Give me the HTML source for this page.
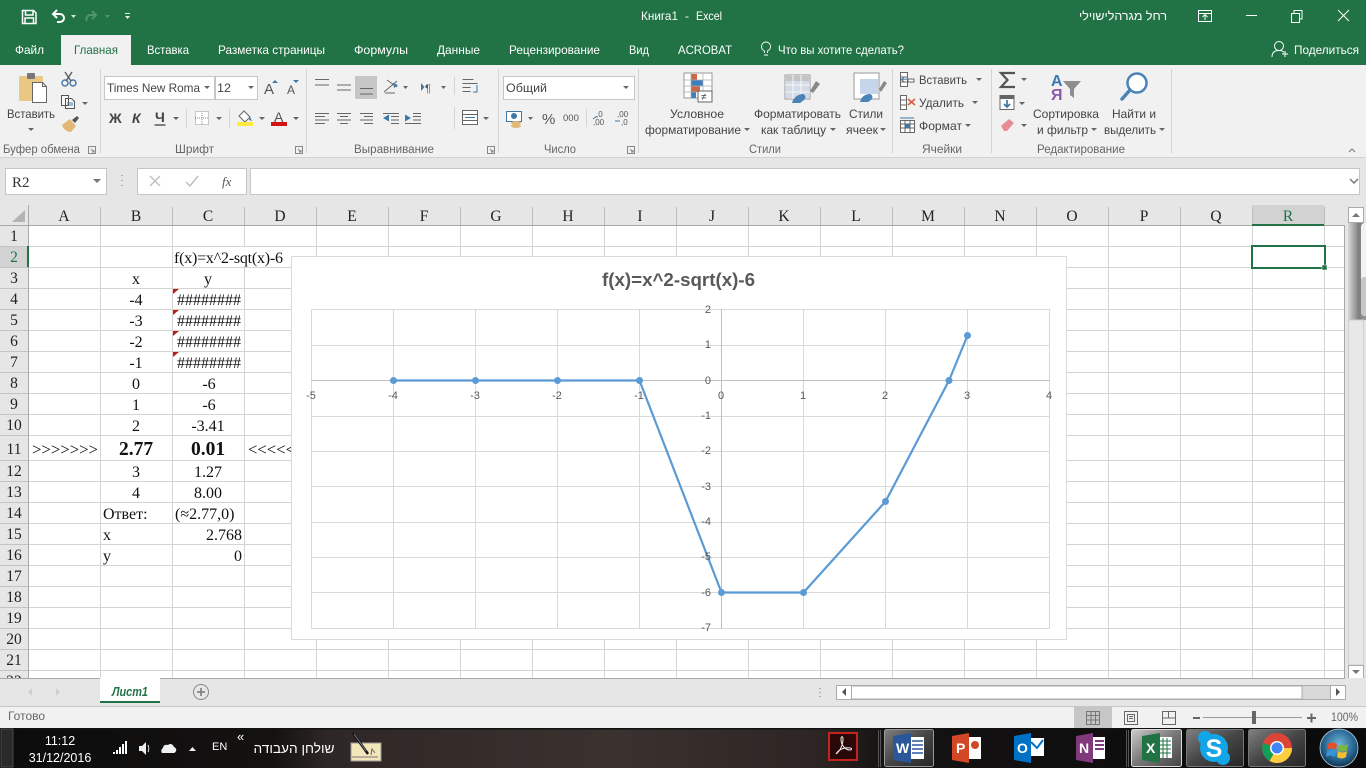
<!DOCTYPE html>
<html lang="ru"><head><meta charset="utf-8"><title>Книга1 - Excel</title>
<style>
html,body{margin:0;padding:0;background:#fff;width:1366px;height:768px;overflow:hidden}
svg{display:block;position:absolute;left:0;top:0}
text{font-family:"Liberation Sans","Noto Sans CJK SC",sans-serif;white-space:pre}
.w{fill:#fff;font-size:12px}
.r{fill:#444;font-size:12px}
.g{fill:#666;font-size:11.5px}
.s{font-family:"Liberation Serif",serif;font-size:16px;fill:#111}
.h{font-family:"Liberation Serif",serif;font-size:15.5px;fill:#222;text-anchor:middle}
.c{text-anchor:middle}
.e{text-anchor:end}
.t{fill:#595959;font-size:11px}
.tb{fill:#fff;font-size:12.5px}
</style></head><body>
<svg width="1366" height="768" viewBox="0 0 1366 768" xmlns="http://www.w3.org/2000/svg">
<defs>
<linearGradient id="tbg" x1="0" x2="1" y1="0" y2="0"><stop offset="0" stop-color="#0c0c0c"/><stop offset=".2" stop-color="#141211"/><stop offset=".24" stop-color="#2e2725"/><stop offset=".45" stop-color="#3a322f"/><stop offset=".6" stop-color="#2c2523"/><stop offset=".65" stop-color="#141212"/><stop offset="1" stop-color="#0a0a0a"/></linearGradient>
<linearGradient id="btn" x1="0" x2="1" y1="0" y2="1"><stop offset="0" stop-color="#808080"/><stop offset=".5" stop-color="#454545"/><stop offset="1" stop-color="#262626"/></linearGradient>
<linearGradient id="btn2" x1="0" x2="1" y1="0" y2="1"><stop offset="0" stop-color="#ccc"/><stop offset=".5" stop-color="#777"/><stop offset="1" stop-color="#444"/></linearGradient>
<linearGradient id="sb" x1="0" x2="1" y1="0" y2="0"><stop offset="0" stop-color="#d8d8d8"/><stop offset=".6" stop-color="#7e7e7e"/><stop offset="1" stop-color="#999"/></linearGradient>
<radialGradient id="orb" cx=".5" cy=".4" r=".6"><stop offset="0" stop-color="#6fb6dc"/><stop offset=".7" stop-color="#24618c"/><stop offset="1" stop-color="#12334c"/></radialGradient>
</defs>

<!-- title + tabs -->
<rect width="1366" height="65" fill="#217346"/>
<path d="M22.5 10.5h11l2.500 2.500v10.500h-13.500zM25.500 10.500v4.500h7.500v-4.500M25 23.500v-5.500h8.500v5.500" fill="none" stroke="#fff" stroke-width="1.500"/>
<path d="M57 10l-4 4 4 4M53 14h7a4 4 0 0 1 0 8h-3" fill="none" stroke="#fff" stroke-width="2"/>
<path d="M71 15h5l-2.500 3z" fill="#d8e6dd"/>
<path d="M92 11l4 4-4 4M96 15h-6a4 4 0 0 0-3 6" fill="none" stroke="#4f9470" stroke-width="2"/>
<path d="M105 15h5l-2.500 3z" fill="#4f9470"/>
<path d="M125 13h5v1h-5zM125 16h5l-2.500 3z" fill="#e8f0eb"/>
<text class="w" x="641" y="20" textLength="37" lengthAdjust="spacingAndGlyphs">Книга1</text>
<text class="w" x="685" y="20">-</text>
<text class="w" x="696" y="20" textLength="26" lengthAdjust="spacingAndGlyphs">Excel</text>
<text class="w c" x="1123" y="20" textLength="88" lengthAdjust="spacingAndGlyphs">רחל מגרהלישוילי</text>
<path d="M1198.500 10.500h13v11h-13zM1198.500 13.500h13M1205 20v-5M1202.500 17l2.500-2.500 2.500 2.500" fill="none" stroke="#fff"/>
<path d="M1246 15.500h11" stroke="#fff"/>
<path d="M1291.500 13.500h8v9h-8zM1294 13v-2.500h8v8.500h-2.500" fill="none" stroke="#fff"/>
<path d="M1338 10l11 11M1349 10l-11 11" stroke="#fff"/>

<rect x="61" y="35" width="70" height="30" fill="#f1f1f1"/>
<g class="tabs">
<text class="w" x="15" y="54" textLength="29" lengthAdjust="spacingAndGlyphs">Файл</text>
<text x="74" y="54" fill="#217346" font-size="12" textLength="44" lengthAdjust="spacingAndGlyphs">Главная</text>
<text class="w" x="147" y="54" textLength="42" lengthAdjust="spacingAndGlyphs">Вставка</text>
<text class="w" x="218" y="54" textLength="107" lengthAdjust="spacingAndGlyphs">Разметка страницы</text>
<text class="w" x="354" y="54" textLength="54" lengthAdjust="spacingAndGlyphs">Формулы</text>
<text class="w" x="437" y="54" textLength="43" lengthAdjust="spacingAndGlyphs">Данные</text>
<text class="w" x="509" y="54" textLength="91" lengthAdjust="spacingAndGlyphs">Рецензирование</text>
<text class="w" x="629" y="54" textLength="20" lengthAdjust="spacingAndGlyphs">Вид</text>
<text class="w" x="678" y="54" textLength="54" lengthAdjust="spacingAndGlyphs">ACROBAT</text>
<path d="M764 55h4M764.500 53v-2c-2-1-3-2.500-3-4.500a4.500 4.500 0 0 1 9 0c0 2-1 3.500-3 4.500v2" fill="none" stroke="#fff" stroke-width=".9"/>
<text class="w" x="778" y="54" textLength="126" lengthAdjust="spacingAndGlyphs">Что вы хотите сделать?</text>
<circle cx="1279" cy="46" r="4.500" fill="none" stroke="#fff"/>
<path d="M1272 57c0-5 3-6.500 7-6.500s4 1 5 2M1282 54h6M1285 51v6" fill="none" stroke="#fff"/>
<text class="w" x="1294" y="54" textLength="65" lengthAdjust="spacingAndGlyphs">Поделиться</text>
</g>

<!-- ribbon -->
<rect y="65" width="1366" height="92" fill="#f1f1f1"/>
<rect y="157" width="1366" height="48" fill="#e6e6e6"/>
<rect y="157" width="1366" height="1" fill="#d2d2d2"/>
<path d="M100.500 69v84M306.500 69v84M498.500 69v84M638.500 69v84M892.500 69v84M991.500 69v84M1171.500 69v84" stroke="#d4d4d4"/>

<!-- clipboard -->
<rect x="19" y="76" width="24" height="25" rx="2" fill="#eac884"/>
<rect x="27" y="73" width="8" height="6" rx="1" fill="#777"/>
<path d="M32.500 82.500h10l4 4v16h-14z" fill="#fff" stroke="#666"/>
<path d="M42.500 82.500v4h4" fill="none" stroke="#666"/>
<circle cx="65" cy="83" r="3" fill="none" stroke="#4a7ba8" stroke-width="1.500"/><circle cx="73" cy="83" r="3" fill="none" stroke="#4a7ba8" stroke-width="1.500"/>
<path d="M72 72l-6 9M65 72l6 9" stroke="#555" stroke-width="1.300"/>
<path d="M61.500 95.500h7v10h-7zM65.500 98.500h6l3 3v7h-9z" fill="#f8f8f8" stroke="#555"/>
<path d="M67 103h6M67 105h6" stroke="#4a7ba8"/>
<path d="M82 102h6l-3 3z" fill="#666"/>
<path d="M62 125l8-6 6 7-5 6c-4 0-8-3-9-7z" fill="#e2b877"/><path d="M72 120l5-4 2 2-4 5z" fill="#555"/>
<text class="r" x="7" y="118" textLength="48" lengthAdjust="spacingAndGlyphs">Вставить</text>
<path d="M28 128h6l-3 3z" fill="#666"/>
<text class="g" x="3" y="153" textLength="77" lengthAdjust="spacingAndGlyphs">Буфер обмена</text>
<path d="M88.500 146.500h7v7h-7zM91 149l3 3M94 150v2h-2" fill="none" stroke="#888"/>

<!-- font -->
<rect x="104.500" y="76.500" width="110" height="23" fill="#fff" stroke="#c6c6c6"/>
<rect x="215.500" y="76.500" width="42" height="23" fill="#fff" stroke="#c6c6c6"/>
<text class="r" x="107" y="92" textLength="93" lengthAdjust="spacingAndGlyphs">Times New Roma</text>
<path d="M204 86h6l-3 3z" fill="#666"/>
<text class="r" x="217" y="92" textLength="14" lengthAdjust="spacingAndGlyphs">12</text>
<path d="M248 86h6l-3 3z" fill="#666"/>
<text x="264" y="94" font-size="15" fill="#555">A</text><path d="M272 83h6l-3-3z" fill="#3c78a8"/>
<text x="287" y="94" font-size="12" fill="#555">A</text><path d="M293 80h6l-3 3z" fill="#3c78a8"/>
<text x="109" y="123" font-size="14" font-weight="bold" fill="#444">Ж</text>
<text x="132" y="123" font-size="14" font-weight="bold" font-style="italic" fill="#444">К</text>
<text x="155" y="122" font-size="14" font-weight="bold" fill="#444">Ч</text><path d="M154.500 125h11" stroke="#444" stroke-width="1.300"/>
<path d="M173 117h6l-3 3zM216 117h6l-3 3zM259 117h6l-3 3zM293 117h6l-3 3z" fill="#666"/>
<path d="M186.500 109v19" stroke="#d4d4d4"/>
<path d="M195.500 111.500h13v13h-13z" fill="#fff" stroke="#999" stroke-dasharray="1 1"/><path d="M202 111v13M195 118h13" stroke="#888" stroke-dasharray="1 1"/>
<path d="M229.500 109v19" stroke="#d4d4d4"/>
<path d="M239 116l5-5 6 6-5 5z" fill="#fff" stroke="#666"/><path d="M250 117l2 4-3-1z" fill="#3c78a8"/>
<rect x="237" y="122" width="16" height="4" fill="#ffeb3b"/>
<text x="274" y="122" font-size="14" fill="#555">A</text>
<rect x="271" y="122" width="16" height="4" fill="#d21414"/>
<text class="g" x="175" y="153" textLength="39" lengthAdjust="spacingAndGlyphs">Шрифт</text>
<path d="M295.500 146.500h7v7h-7zM298 149l3 3M301 150v2h-2" fill="none" stroke="#888"/>

<!-- alignment -->
<rect x="355" y="76" width="22" height="23" fill="#c6c6c6"/>
<path d="M315 79.500h14M315 85h14M337 85h14M337 90h14M360 88.500h13M360 94h13" stroke="#666"/>
<path d="M384 92l13-11M387 80l10 7M385 93h10" stroke="#666" fill="none"/><path d="M393 83l5 2-4 3z" fill="#3c78a8"/>
<path d="M403 86h5l-2.500 3zM441 86h5l-2.500 3z" fill="#666"/>
<text x="425" y="92" font-size="11" fill="#555">¶</text><path d="M421 83v8l3.500-4z" fill="#3c78a8"/>
<path d="M315 113.500h14M315 116.500h10M315 120h14M315 123.500h10M337 113.500h14M340 116.500h8M337 120h14M340 123.500h8M360 113.500h13M364 116.500h9M360 120h13M364 123.500h9" stroke="#666"/>
<path d="M391 113.500h8M391 116.500h8M391 120h8M391 123.500h8M383 113.500h16M413 113.500h8M413 116.500h8M413 120h8M413 123.500h8M405 123.500h16" stroke="#666"/>
<path d="M383 118l6-3.500v7zM411 118l-6-3.500v7z" fill="#3c78a8"/>
<path d="M462.500 79.500h11M462.500 83.500h15M462.500 87.500h8M462.500 91.500h8" stroke="#666"/><path d="M477 85v7h-4" fill="none" stroke="#3c78a8"/>
<path d="M462.500 110.500h15v14h-15zM462.500 114.500h15M462.500 120.500h15" fill="#fff" stroke="#666"/><path d="M465 117.500h10" stroke="#3c78a8"/>
<path d="M483 117h6l-3 3z" fill="#666"/>
<path d="M454.500 77v18M454.500 107v22" stroke="#d4d4d4"/>
<text class="g" x="354" y="153" textLength="80" lengthAdjust="spacingAndGlyphs">Выравнивание</text>
<path d="M487.500 146.500h7v7h-7zM490 149l3 3M493 150v2h-2" fill="none" stroke="#888"/>

<!-- number -->
<rect x="503.500" y="76.500" width="131" height="23" fill="#fff" stroke="#c6c6c6"/>
<text class="r" x="506" y="92" textLength="41" lengthAdjust="spacingAndGlyphs">Общий</text>
<path d="M623 86h6l-3 3z" fill="#666"/>
<rect x="506.500" y="111.500" width="15" height="10" fill="#fff" stroke="#3c78a8"/><circle cx="514" cy="116" r="3" fill="#3c78a8"/>
<ellipse cx="516" cy="123" rx="5" ry="2" fill="#e2b877"/><ellipse cx="516" cy="126" rx="5" ry="2" fill="#e2b877"/>
<path d="M528 117h5l-2.500 3z" fill="#666"/>
<text x="542" y="124" font-size="15" fill="#555">%</text>
<text x="563" y="121" font-size="9.500" fill="#555">000</text>
<path d="M586.500 109v18" stroke="#d4d4d4"/>
<text x="596" y="117" font-size="8" fill="#555">,0</text><text x="593" y="125" font-size="8" fill="#555">,00</text>
<text x="617" y="117" font-size="8" fill="#555">,00</text><text x="621" y="125" font-size="8" fill="#555">,0</text>
<path d="M593 119l4-3M615 121h5" stroke="#3c78a8"/>
<text class="g" x="544" y="153" textLength="32" lengthAdjust="spacingAndGlyphs">Число</text>
<path d="M627.500 146.500h7v7h-7zM630 149l3 3M633 150v2h-2" fill="none" stroke="#888"/>

<!-- styles -->
<g transform="translate(640,65)">
<rect x="44" y="8" width="28" height="25" fill="#fff" stroke="#999"/>
<rect x="51" y="9" width="6" height="6" fill="#c86a4a"/><rect x="51" y="15" width="12" height="6" fill="#3f7fc0"/><rect x="51" y="21" width="9" height="6" fill="#c86a4a"/><rect x="51" y="27" width="5" height="6" fill="#3f7fc0"/>
<path d="M51 8v25M63 8v25M44 15h28M44 21h28M44 27h28" stroke="#aaa" stroke-width=".7"/>
<rect x="58" y="26" width="14" height="11" fill="#fff" stroke="#666"/>
<text x="61" y="35" font-size="10" fill="#444">≠</text>
<rect x="145" y="10" width="25" height="24" fill="#fff" stroke="#999"/><rect x="146" y="11" width="23" height="5" fill="#c4c4c4"/><rect x="146" y="16" width="23" height="17" fill="#d3dbe6"/>
<path d="M153 10v24M161 10v24M145 20h25M145 27h25" stroke="#fff" stroke-width=".8"/>
<path d="M170 26l6-10 4 3-7 9z" fill="#888"/><path d="M152 38c1-5 6-9 11-9 3 1 3 4 1 6l-4 3z" fill="#4a83b8"/>
<rect x="214" y="8" width="25" height="26" fill="#fff" stroke="#999"/><rect x="220" y="14" width="18" height="15" fill="#c6d6ea"/>
<path d="M239 24l5-8 3 2-6 9z" fill="#888"/><path d="M220 37c1-5 5-8 10-8 3 1 3 4 1 6l-3 2z" fill="#4a83b8"/>
</g>
<text class="r c" x="697" y="118" textLength="54" lengthAdjust="spacingAndGlyphs">Условное</text>
<text class="r" x="645" y="134" textLength="96" lengthAdjust="spacingAndGlyphs">форматирование</text>
<path d="M744 128h6l-3 3z" fill="#666"/>
<text class="r" x="754" y="118" textLength="87" lengthAdjust="spacingAndGlyphs">Форматировать</text>
<text class="r" x="761" y="134" textLength="65" lengthAdjust="spacingAndGlyphs">как таблицу</text>
<path d="M830 128h6l-3 3z" fill="#666"/>
<text class="r" x="849" y="118" textLength="34" lengthAdjust="spacingAndGlyphs">Стили</text>
<text class="r" x="846" y="134" textLength="32" lengthAdjust="spacingAndGlyphs">ячеек</text>
<path d="M880 128h6l-3 3z" fill="#666"/>
<text class="g" x="749" y="153" textLength="32" lengthAdjust="spacingAndGlyphs">Стили</text>

<!-- cells -->
<path d="M900.500 72.500h7v14h-7zM900.500 77h7M900.500 82h7M908 79h6v3h-6z" fill="#fff" stroke="#666"/><path d="M901 79.500l7-.5M901 79.500l3-2M901 79.500l3 2" stroke="#3c78a8"/>
<text class="r" x="919" y="84" textLength="48" lengthAdjust="spacingAndGlyphs">Вставить</text><path d="M976 78h6l-3 3z" fill="#666"/>
<path d="M900.500 95.500h6v14h-6zM900.500 100h6M900.500 105h6" fill="#fff" stroke="#666"/><path d="M908 99l7 6M915 99l-7 6" stroke="#d9583a" stroke-width="1.500"/>
<text class="r" x="919" y="107" textLength="45" lengthAdjust="spacingAndGlyphs">Удалить</text><path d="M972 101h6l-3 3z" fill="#666"/>
<path d="M900.500 120.500h14v12h-14zM900.500 124h14M900.500 128h14M905 120v12M910 120v12" fill="#fff" stroke="#666"/><rect x="905" y="124" width="5" height="4" fill="#3c78a8"/><path d="M900 118h14" stroke="#3c78a8"/>
<text class="r" x="919" y="130" textLength="43" lengthAdjust="spacingAndGlyphs">Формат</text><path d="M965 124h6l-3 3z" fill="#666"/>
<text class="g" x="922" y="153" textLength="40" lengthAdjust="spacingAndGlyphs">Ячейки</text>

<!-- editing -->
<path d="M1015 73h-14l6.500 7-6.500 7h14" fill="none" stroke="#555" stroke-width="2.200"/>
<path d="M1021 78h6l-3 3zM1019 102h6l-3 3zM1021 124h6l-3 3z" fill="#666"/>
<rect x="1000" y="95.500" width="14" height="14" fill="#fff" stroke="#666"/><rect x="1000" y="95" width="14" height="4" fill="#666"/>
<path d="M1007 100v7M1004 104l3 3 3-3" fill="none" stroke="#3c78a8" stroke-width="1.700"/>
<path d="M1001 126l8-7 5 4-7 8h-3z" fill="#e88b95"/>
<text x="1051" y="86" font-size="16" font-weight="bold" fill="#3c78b4">A</text><text x="1051" y="100" font-size="16" font-weight="bold" fill="#8a5aa8">Я</text>
<path d="M1063 81h18l-7 8v9l-4-3v-6z" fill="#8e8e8e"/>
<text class="r" x="1033" y="118" textLength="66" lengthAdjust="spacingAndGlyphs">Сортировка</text>
<text class="r" x="1037" y="134" textLength="51" lengthAdjust="spacingAndGlyphs">и фильтр</text><path d="M1091 128h6l-3 3z" fill="#666"/>
<text class="r" x="1112" y="118" textLength="44" lengthAdjust="spacingAndGlyphs">Найти и</text>
<text class="r" x="1104" y="134" textLength="52" lengthAdjust="spacingAndGlyphs">выделить</text><path d="M1159 128h6l-3 3z" fill="#666"/>
<circle cx="1137" cy="83" r="9.500" fill="#fff" stroke="#4a83b8" stroke-width="2.500"/><path d="M1130 90l-8 9" stroke="#4a83b8" stroke-width="3.500" stroke-linecap="round"/>
<text class="g" x="1037" y="153" textLength="88" lengthAdjust="spacingAndGlyphs">Редактирование</text>
<path d="M1349 152l3-3 3 3" fill="none" stroke="#777"/>

<!-- formula bar -->
<rect x="5.500" y="168.500" width="101" height="26" fill="#fff" stroke="#c6c6c6"/>
<text x="12" y="187" font-size="15" fill="#333" style="font-family:'Liberation Serif',serif">R2</text>
<path d="M93 179h8l-4 4z" fill="#777"/>
<path d="M122 175v1M122 180v1M122 185v1" stroke="#aaa" stroke-width="2"/>
<rect x="137.500" y="168.500" width="109" height="26" fill="#fff" stroke="#c6c6c6"/>
<path d="M150 176l10 10M160 176l-10 10" stroke="#c0c0c0" stroke-width="1.500"/>
<path d="M186 182l4 4 8-10" fill="none" stroke="#c0c0c0" stroke-width="1.500"/>
<text x="222" y="186" font-size="13" font-style="italic" fill="#555" style="font-family:'Liberation Serif',serif">fx</text>
<rect x="250.500" y="168.500" width="1109" height="26" fill="#fff" stroke="#c6c6c6"/>
<path d="M1350 179l4 4 4-4" fill="none" stroke="#777" stroke-width="1.500"/>

<!-- grid -->
<rect x="0" y="205" width="1366" height="473" fill="#e6e6e6"/>
<rect x="28" y="225" width="1316" height="453" fill="#fff"/>
<path d="M28 246.500h1316M28 267.500h1316M28 288.500h1316M28 309.500h1316M28 330.500h1316M28 351.500h1316M28 372.500h1316M28 393.500h1316M28 414.500h1316M28 435.500h1316M28 460.500h1316M28 481.500h1316M28 502.500h1316M28 523.500h1316M28 544.500h1316M28 565.500h1316M28 586.500h1316M28 607.500h1316M28 628.500h1316M28 649.500h1316M28 670.500h1316" stroke="#d4d4d4"/>
<path d="M100.500 225v453M172.500 225v453M244.500 225v453M316.500 225v453M388.500 225v453M460.500 225v453M532.500 225v453M604.500 225v453M676.500 225v453M748.500 225v453M820.500 225v453M892.500 225v453M964.500 225v453M1036.500 225v453M1108.500 225v453M1180.500 225v453M1252.500 225v453M1324.500 225v453" stroke="#d4d4d4"/>
<rect x="244" y="247" width="1" height="20" fill="#fff"/>
<!-- header -->
<rect x="1252" y="205" width="72" height="20" fill="#d2d2d2"/>
<rect x="0" y="246" width="28" height="21" fill="#d2d2d2"/>
<path d="M0 225.500h1344M28.500 205v473M1344.500 225v453" stroke="#a8a8a8"/>
<path d="M100.500 207v18M172.500 207v18M244.500 207v18M316.500 207v18M388.500 207v18M460.500 207v18M532.500 207v18M604.500 207v18M676.500 207v18M748.500 207v18M820.500 207v18M892.500 207v18M964.500 207v18M1036.500 207v18M1108.500 207v18M1180.500 207v18M1252.500 207v18M1324.500 207v18" stroke="#bdbdbd"/>
<path d="M0 246.500h28M0 267.500h28M0 288.500h28M0 309.500h28M0 330.500h28M0 351.500h28M0 372.500h28M0 393.500h28M0 414.500h28M0 435.500h28M0 460.500h28M0 481.500h28M0 502.500h28M0 523.500h28M0 544.500h28M0 565.500h28M0 586.500h28M0 607.500h28M0 628.500h28M0 649.500h28M0 670.500h28" stroke="#c4c4c4"/>
<path d="M25 210v12h-13z" fill="#b4b4b4"/>
<rect x="1252" y="224" width="72" height="2" fill="#217346"/><rect x="27" y="246" width="2" height="21" fill="#217346"/>
<g>
<text class="h" x="64" y="221">A</text><text class="h" x="136" y="221">B</text><text class="h" x="208" y="221">C</text><text class="h" x="280" y="221">D</text><text class="h" x="352" y="221">E</text><text class="h" x="424" y="221">F</text><text class="h" x="496" y="221">G</text><text class="h" x="568" y="221">H</text><text class="h" x="640" y="221">I</text><text class="h" x="712" y="221">J</text><text class="h" x="784" y="221">K</text><text class="h" x="856" y="221">L</text><text class="h" x="928" y="221">M</text><text class="h" x="1000" y="221">N</text><text class="h" x="1072" y="221">O</text><text class="h" x="1144" y="221">P</text><text class="h" x="1216" y="221">Q</text><text class="h" x="1288" y="221" style="fill:#217346">R</text>
</g>
<g>
<text class="h" x="14" y="241">1</text><text class="h" x="14" y="262" style="fill:#217346">2</text><text class="h" x="14" y="283">3</text><text class="h" x="14" y="304">4</text><text class="h" x="14" y="325">5</text><text class="h" x="14" y="346">6</text><text class="h" x="14" y="367">7</text><text class="h" x="14" y="388">8</text><text class="h" x="14" y="409">9</text><text class="h" x="14" y="430">10</text><text class="h" x="14" y="454">11</text><text class="h" x="14" y="476">12</text><text class="h" x="14" y="497">13</text><text class="h" x="14" y="518">14</text><text class="h" x="14" y="539">15</text><text class="h" x="14" y="560">16</text><text class="h" x="14" y="581">17</text><text class="h" x="14" y="602">18</text><text class="h" x="14" y="623">19</text><text class="h" x="14" y="644">20</text><text class="h" x="14" y="665">21</text><text class="h" x="14" y="686">22</text>
</g>
<!-- cells -->
<text class="s" x="174" y="263" textLength="109">f(x)=x^2-sqt(x)-6</text>
<text class="s c" x="136" y="284">x</text><text class="s c" x="208" y="284">y</text>
<text class="s c" x="136" y="305">-4</text><text class="s c" x="136" y="326">-3</text><text class="s c" x="136" y="347">-2</text><text class="s c" x="136" y="368">-1</text><text class="s c" x="136" y="389">0</text><text class="s c" x="136" y="410">1</text><text class="s c" x="136" y="431">2</text>
<text class="s e" x="241" y="305">########</text><text class="s e" x="241" y="326">########</text><text class="s e" x="241" y="347">########</text><text class="s e" x="241" y="368">########</text>
<path d="M173 289h6l-6 5zM173 310h6l-6 5zM173 331h6l-6 5zM173 352h6l-6 5z" fill="#b3201c"/>
<text class="s c" x="209" y="389">-6</text><text class="s c" x="209" y="410">-6</text><text class="s c" x="208" y="431">-3.41</text>
<text class="s" x="32" y="455" textLength="66" lengthAdjust="spacingAndGlyphs" style="font-size:17px">&gt;&gt;&gt;&gt;&gt;&gt;&gt;</text>
<text class="s c" x="136" y="455" style="font-size:19.500px;font-weight:bold">2.77</text>
<text class="s c" x="208" y="455" style="font-size:19.500px;font-weight:bold">0.01</text>
<text class="s" x="248" y="455" textLength="47" lengthAdjust="spacingAndGlyphs" style="font-size:17px">&lt;&lt;&lt;&lt;&lt;</text>
<text class="s c" x="136" y="477">3</text><text class="s c" x="208" y="477">1.27</text>
<text class="s c" x="136" y="498">4</text><text class="s c" x="208" y="498">8.00</text>
<text class="s" x="103" y="519">Ответ:</text><text class="s" x="175" y="519">(≈2.77,0)</text>
<text class="s" x="103" y="540">x</text><text class="s e" x="242" y="540">2.768</text>
<text class="s" x="103" y="561">y</text><text class="s e" x="242" y="561">0</text>
<!-- selection -->
<rect x="1252" y="246" width="73" height="22" fill="none" stroke="#217346" stroke-width="2"/>
<rect x="1322" y="265" width="5" height="5" fill="#217346" stroke="#fff" stroke-width=".5"/>

<!-- chart -->
<rect x="291.500" y="256.500" width="775" height="383" fill="#fff" stroke="#d9d9d9"/>
<text x="602" y="286" font-size="18" font-weight="bold" fill="#595959" textLength="153" lengthAdjust="spacingAndGlyphs">f(x)=x^2-sqrt(x)-6</text>
<path d="M311 309.500h739M311 345.500h739M311 380.500h739M311 416.500h739M311 451.500h739M311 486.500h739M311 522.500h739M311 557.500h739M311 592.500h739M311 628.500h739" stroke="#d9d9d9"/>
<path d="M311.500 309v320M393.500 309v320M475.500 309v320M557.500 309v320M639.500 309v320M721.500 309v320M803.500 309v320M885.500 309v320M967.500 309v320M1049.500 309v320" stroke="#d9d9d9"/>
<path d="M311 380.500h739M721.500 309v320" stroke="#bfbfbf"/>
<polyline points="393,380.500 475,380.500 557,380.500 639.500,380.500 721.500,592.500 803.500,592.500 885.500,501.500 949,380.500 967.500,335.500" fill="none" stroke="#5b9bd5" stroke-width="2.200"/>
<g fill="#5b9bd5"><circle cx="393.500" cy="380.500" r="3.500"/><circle cx="475.500" cy="380.500" r="3.500"/><circle cx="557.500" cy="380.500" r="3.500"/><circle cx="639.500" cy="380.500" r="3.500"/><circle cx="721.500" cy="592.500" r="3.500"/><circle cx="803.500" cy="592.500" r="3.500"/><circle cx="885.500" cy="501.500" r="3.500"/><circle cx="949" cy="380.500" r="3.500"/><circle cx="967.500" cy="335.500" r="3.500"/></g>
<g class="ticks">
<text class="t c" x="311" y="399">-5</text><text class="t c" x="393" y="399">-4</text><text class="t c" x="475" y="399">-3</text><text class="t c" x="557" y="399">-2</text><text class="t c" x="639" y="399">-1</text><text class="t c" x="721" y="399">0</text><text class="t c" x="803" y="399">1</text><text class="t c" x="885" y="399">2</text><text class="t c" x="967" y="399">3</text><text class="t c" x="1049" y="399">4</text>
<text class="t e" x="711" y="313">2</text><text class="t e" x="711" y="348">1</text><text class="t e" x="711" y="384">0</text><text class="t e" x="711" y="419">-1</text><text class="t e" x="711" y="454">-2</text><text class="t e" x="711" y="490">-3</text><text class="t e" x="711" y="525">-4</text><text class="t e" x="711" y="560">-5</text><text class="t e" x="711" y="596">-6</text><text class="t e" x="711" y="631">-7</text>
</g>

<!-- vertical scrollbar -->
<rect x="1348.500" y="207.500" width="15" height="15" fill="#fff" stroke="#ababab"/>
<path d="M1352 217h8l-4-4z" fill="#777"/>
<rect x="1348" y="223" width="18" height="97" fill="url(#sb)"/>
<rect x="1361" y="223" width="8" height="93" rx="4" fill="#f2f2f2"/><rect x="1361" y="277" width="8" height="39" rx="3" fill="#c6c8c8"/>
<rect x="1348.500" y="320" width="15" height="345" fill="#e8e8e8" stroke="#d0d0d0"/>
<rect x="1348.500" y="665.500" width="15" height="13" fill="#fff" stroke="#ababab"/>
<path d="M1352 670h8l-4 4z" fill="#777"/>

<!-- sheet bar -->
<rect y="678" width="1366" height="29" fill="#e6e6e6"/>
<path d="M0 678.500h1345" stroke="#a8a8a8"/>
<rect y="706" width="1366" height="1" fill="#c6c6c6"/>
<path d="M32 688v8l-4-4zM56 688v8l4-4z" fill="#cfcfcf"/>
<rect x="100" y="678" width="60" height="25" fill="#fff"/><rect x="100" y="701" width="60" height="2" fill="#217346"/>
<text x="112" y="696" font-size="12.500" font-weight="bold" font-style="italic" fill="#217346" textLength="36" lengthAdjust="spacingAndGlyphs">Лист1</text>
<circle cx="201" cy="692" r="7.500" fill="none" stroke="#888"/><path d="M197 692h8M201 688v8" stroke="#777" stroke-width="1.500"/>
<path d="M820 696v1M820 692v1M820 688v1" stroke="#aaa" stroke-width="2"/>
<rect x="836.500" y="685.500" width="509" height="14" fill="#d8d8d8" stroke="#ababab"/>
<rect x="851" y="686" width="451" height="13" fill="#fff" stroke="#ababab"/>
<rect x="837" y="686" width="14" height="13" fill="#fff"/><rect x="1331" y="686" width="14" height="13" fill="#fff"/>
<path d="M1330.500 685v14M851.500 685v14" stroke="#ababab"/>
<path d="M846 688v8l-4-4zM1336 688v8l4-4z" fill="#555"/>

<!-- status bar -->
<rect y="707" width="1366" height="21" fill="#f1f1f1"/>
<text class="g" x="8" y="720" textLength="37" lengthAdjust="spacingAndGlyphs">Готово</text>
<rect x="1074" y="707" width="38" height="21" fill="#c6c6c6"/>
<path d="M1086.500 711.500h13v13h-13zM1086.500 715.500h13M1086.500 720h13M1091 711v13M1095.500 711v13" fill="none" stroke="#777"/>
<path d="M1124.500 711.500h13v13h-13zM1127.500 714.500h7v7h-7zM1129 716.500h4M1129 718.500h4" fill="none" stroke="#666"/>
<path d="M1162.500 711.500h13v13h-13zM1168.500 711v7h-6M1168.500 718h7" fill="none" stroke="#666"/>
<rect x="1193" y="717" width="7" height="2" fill="#666"/>
<rect x="1203" y="717" width="99" height="1" fill="#999"/>
<rect x="1252" y="711" width="4" height="13" fill="#666"/>
<path d="M1307 718h9M1311.500 713.500v9" stroke="#666" stroke-width="2"/>
<text class="g" x="1331" y="721" textLength="27" lengthAdjust="spacingAndGlyphs">100%</text>

<!-- taskbar -->
<rect y="728" width="1366" height="40" fill="url(#tbg)"/>
<rect y="728" width="1366" height="1.500" fill="#111"/>
<rect x="1" y="729" width="12" height="38" fill="#2a2a2a" stroke="#555" stroke-width=".8"/>
<text class="tb c" x="60" y="745">11:12</text>
<text class="tb c" x="60" y="762">31/12/2016</text>
<path d="M113 752h2v2h-2zM116 750h2v4h-2zM119 747h2v7h-2zM122 744h2v10h-2zM125 741h2v13h-2z" fill="#fff"/>
<path d="M139 746h3l4-4v13l-4-4h-3z" fill="#eee"/><path d="M148 745c1 2 1 5 0 7" fill="none" stroke="#eee"/>
<path d="M162 753h12c3-1 3-5 0-6-1-3-4-4-6-2-3-1-5 1-5 3-2 1-2 4-1 5z" fill="#f0f0f0"/>
<path d="M189 751l3.500-4 3.500 4z" fill="#eee"/>
<text x="212" y="750" font-size="11" fill="#fff">EN</text>
<text x="237" y="741" font-size="13" fill="#fff">«</text>
<text class="c" x="294" y="753" font-size="13" fill="#fff" textLength="81" lengthAdjust="spacingAndGlyphs">שולחן העבודה</text>
<rect x="351" y="743" width="30" height="18" fill="#f2e6ba" stroke="#999"/><path d="M352 757h26" stroke="#777"/>
<path d="M353 733l15 21" stroke="#111" stroke-width="2.500"/><path d="M354 734l12 17" stroke="#89a" stroke-width=".7"/>
<path d="M371 755l1-6 3 4" fill="none" stroke="#666"/>

<rect x="829" y="733" width="28" height="27" fill="#2a0808" stroke="#c4221c" stroke-width="2"/>
<path d="M836 754c4-3 7-9 7-15 0-3-2-3-2 0 0 6 4 11 9 11 2 0 2-2 0-2-5-1-11 1-14 6z" fill="none" stroke="#eee"/>

<path d="M878.500 730v37M880.500 730v37M1126.500 730v37M1128.500 730v37" stroke="#555"/>
<rect x="884.500" y="729.500" width="49" height="37" rx="2" fill="url(#btn)" stroke="#999"/>
<rect x="1131.500" y="729.500" width="50" height="37" rx="2" fill="url(#btn2)" stroke="#ddd"/>
<rect x="1186.500" y="729.500" width="57" height="37" rx="2" fill="url(#btn)" stroke="#777"/>
<rect x="1248.500" y="729.500" width="57" height="37" rx="2" fill="url(#btn)" stroke="#777"/>

<!-- word -->
<rect x="906" y="737" width="18" height="22" fill="#fff"/><path d="M912 741h11M912 745h11M912 749h11M912 753h11" stroke="#2b579a" stroke-width="1.500"/>
<path d="M893 736l18-3v30l-18-3z" fill="#2b579a"/><text x="896" y="753" font-size="14" font-weight="bold" fill="#fff">W</text>
<!-- ppt -->
<rect x="966" y="737" width="15" height="22" fill="#fff"/><circle cx="975" cy="745" r="4" fill="#d24726"/>
<path d="M952 736l17-3v30l-17-3z" fill="#d24726"/><text x="956" y="753" font-size="14" font-weight="bold" fill="#fff">P</text>
<!-- outlook -->
<rect x="1029" y="738" width="15" height="18" fill="#fff"/><path d="M1031 742l6 6 6-8" fill="none" stroke="#0072c6" stroke-width="2"/>
<path d="M1014 736l17-3v30l-17-3z" fill="#0072c6"/><text x="1017" y="753" font-size="14" font-weight="bold" fill="#fff">O</text>
<!-- onenote -->
<rect x="1092" y="737" width="13" height="22" fill="#fff"/><path d="M1095 741h9M1095 745h9M1095 749h9" stroke="#80397b" stroke-width="2"/>
<path d="M1076 736l17-3v30l-17-3z" fill="#80397b"/><text x="1079" y="753" font-size="14" font-weight="bold" fill="#fff">N</text>
<!-- excel -->
<rect x="1157" y="737" width="15" height="21" fill="#fff"/><path d="M1160 741h11M1160 745h11M1160 749h11M1160 753h11M1163 738v20M1167 738v20" stroke="#217346"/>
<path d="M1142 736l18-3v30l-18-3z" fill="#217346"/><text x="1146" y="753" font-size="14" font-weight="bold" fill="#fff">X</text>
<!-- skype -->
<circle cx="1214" cy="748" r="14" fill="#12a5e8"/><circle cx="1205" cy="738" r="7" fill="#12a5e8"/><circle cx="1223" cy="758" r="7" fill="#12a5e8"/>
<text class="c" x="1214" y="757" font-size="25" font-weight="bold" fill="#fff">S</text>
<!-- chrome -->
<circle cx="1277" cy="748" r="15" fill="#db4437"/>
<path d="M1277 748l-7.500 13a15 15 0 0 1-6.500-18z" fill="#0f9d58"/><path d="M1277 748h15a15 15 0 0 1-22.500 13z" fill="#ffcd40"/>
<circle cx="1277" cy="748" r="7" fill="#fff"/><circle cx="1277" cy="748" r="5.500" fill="#4285f4"/>
<!-- start -->
<circle cx="1339" cy="748" r="19" fill="url(#orb)" stroke="#b8d3e6" stroke-width=".8"/>
<path d="M1328 744c3-2 6-2 9 0l-1 6c-3-2-6-2-9 0z" fill="#e5512c"/><path d="M1339 744c3 2 6 2 9 0l-1 6c-3 2-6 2-9 0z" fill="#7db83c"/>
<path d="M1327 751c3-2 6-2 9 0l-1 6c-3-2-6-2-9 0z" fill="#3a93d4"/><path d="M1338 751c3 2 6 2 9 0l-1 6c-3 2-6 2-9 0z" fill="#f4bf2a"/>
</svg>
</body></html>
